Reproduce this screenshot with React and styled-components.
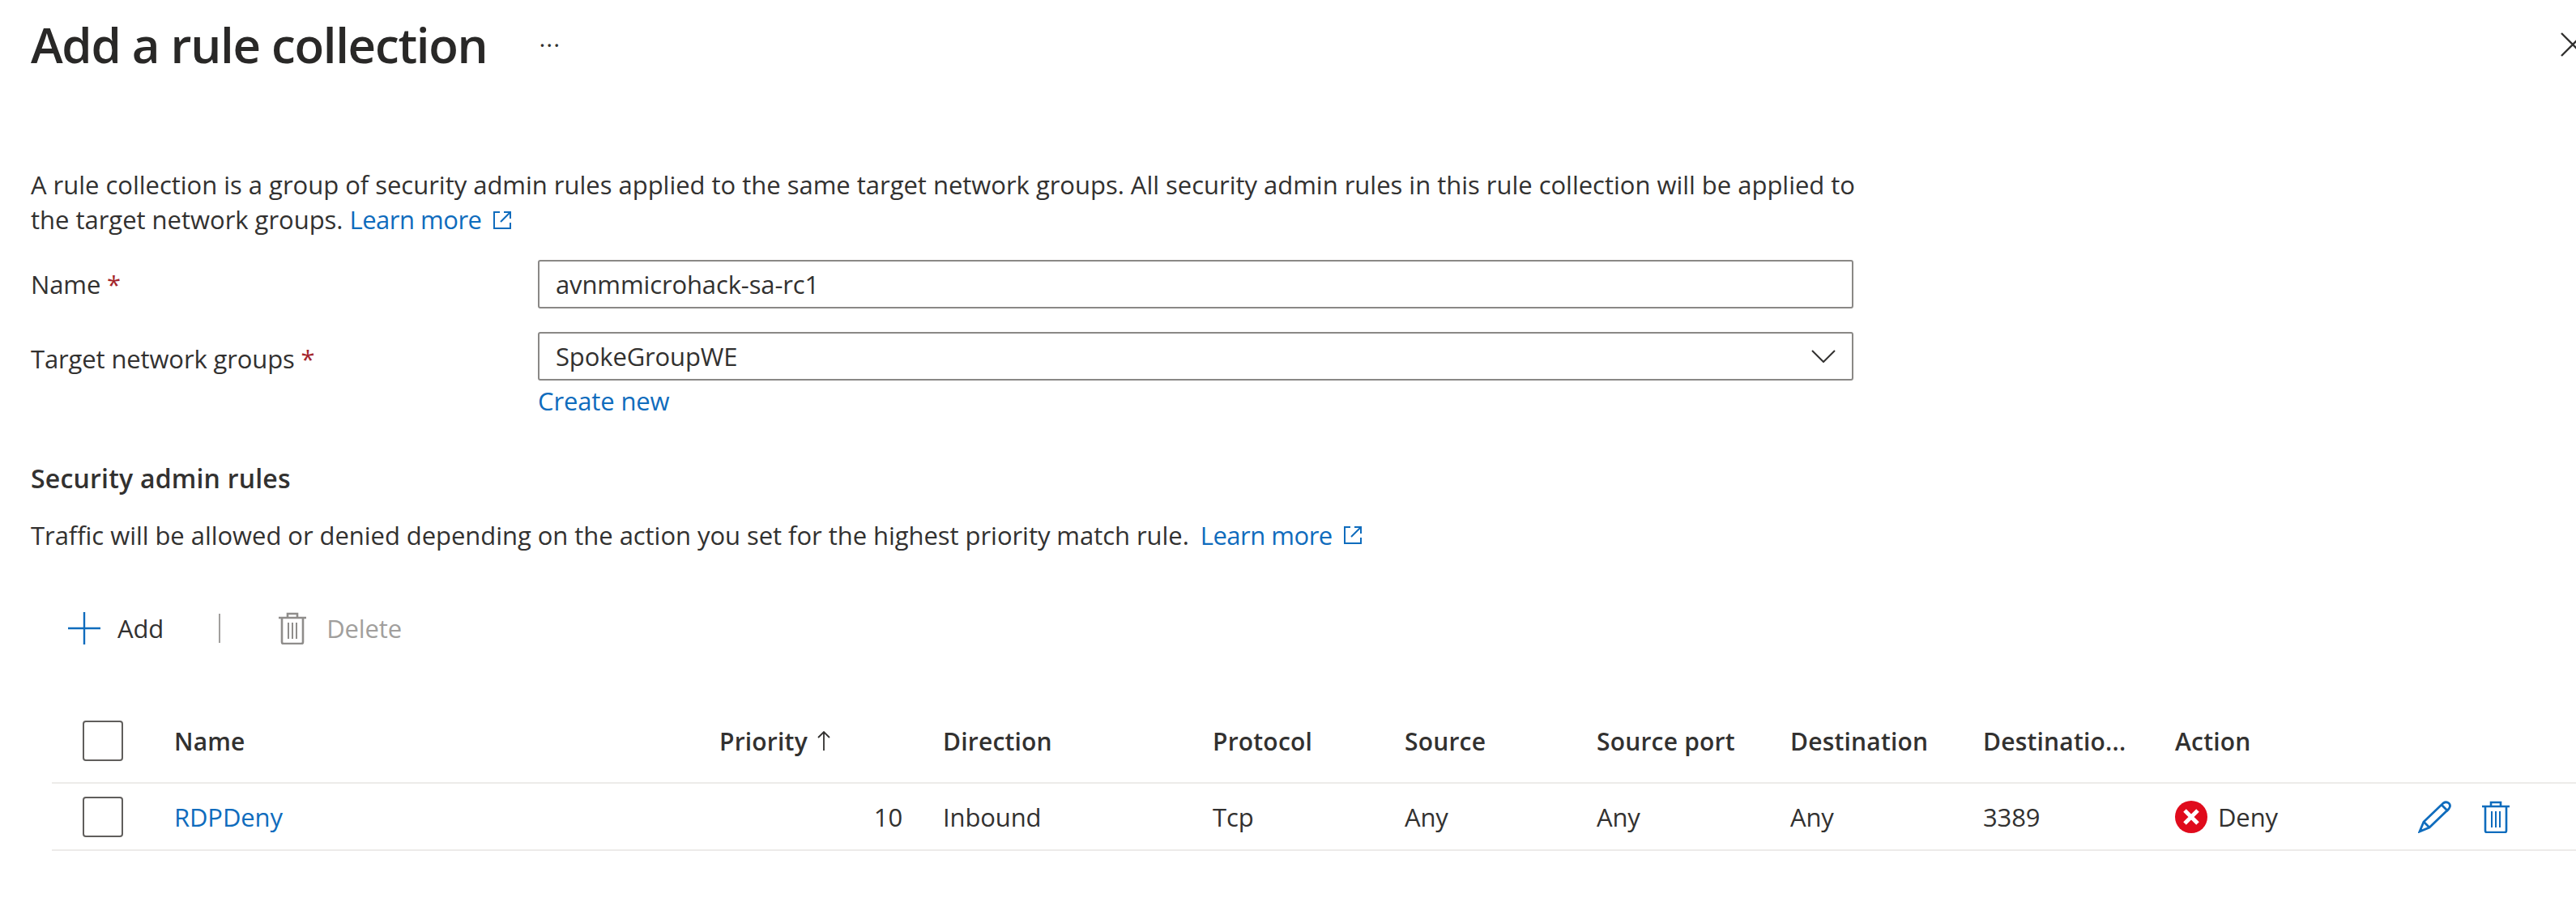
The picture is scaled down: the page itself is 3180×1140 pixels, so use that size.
import styled, { createGlobalStyle } from "styled-components";

const GlobalStyle = createGlobalStyle`
  html, body {
    margin: 0;
    padding: 0;
    background: #ffffff;
  }
  body {
    font-family: "Open Sans", "Noto Sans", sans-serif;
    color: #323130;
  }
`;

const Page = styled.div`
  width: 3180px;
  height: 1140px;
  overflow: hidden;
  box-sizing: border-box;
  padding-left: 38px;
`;

const Header = styled.header`
  display: flex;
  align-items: center;
  height: 110px;
`;

const Title = styled.h1`
  margin: 0;
  font-size: 60px;
  font-weight: 600;
  letter-spacing: -1.3px;
  color: #292827;
`;

const MoreButton = styled.span`
  margin-left: 64px;
  font-size: 30px;
  line-height: 30px;
  letter-spacing: 1px;
`;

const CloseButton = styled.span`
  display: flex;
  margin-left: auto;
  margin-right: -11px;
`;

const Description = styled.p`
  margin: 97px 0 0;
  width: 2270px;
  font-size: 31px;
  line-height: 43px;
  letter-spacing: -0.02px;
`;

const Link = styled.a`
  color: #0f6cbd;
  text-decoration: none;
`;

const LearnMore = styled(Link)`
  display: inline-flex;
  align-items: center;
  gap: 13px;
  letter-spacing: -0.5px;
`;

const FormRow = styled.div`
  display: grid;
  grid-template-columns: 626px 1624px;
  align-items: center;
  margin-top: ${({ $top }) => $top}px;
`;

const FieldLabel = styled.label`
  font-size: 31px;
  letter-spacing: -0.13px;
  margin-top: ${({ $drop }) => $drop || 0}px;
`;

const Required = styled.span`
  color: #a4262c;
`;

const Field = styled.div`
  height: 60px;
  box-sizing: border-box;
  display: flex;
  align-items: center;
  justify-content: space-between;
  padding: 0 20px;
  border: 2px solid #8a8886;
  border-radius: 3px;
  font-size: 31px;
  letter-spacing: -0.13px;
`;

const CreateLink = styled(Link)`
  grid-column: 2;
  font-size: 31px;
  letter-spacing: -0.13px;
  margin-top: 4px;
`;

const SectionTitle = styled.h2`
  margin: 54px 0 0;
  font-size: 32px;
  line-height: 42px;
  font-weight: 600;
  letter-spacing: 0.2px;
`;

const SectionText = styled.p`
  margin: 28px 0 0;
  font-size: 31px;
  line-height: 42px;
  letter-spacing: -0.05px;
  display: flex;
  align-items: center;
  gap: 14px;
`;

const Toolbar = styled.div`
  display: flex;
  align-items: center;
  height: 44px;
  margin: 72px 0 0 46px;
  font-size: 31px;
  letter-spacing: -0.13px;
`;

const ToolButton = styled.span`
  display: flex;
  align-items: center;
  gap: ${({ $gap }) => $gap}px;
  color: ${({ $disabled }) => ($disabled ? "#a19f9d" : "#323130")};
`;

const ToolSeparator = styled.span`
  width: 2px;
  height: 36px;
  margin: 0 72px 0 68px;
  background: #a19f9d;
`;

const Table = styled.div`
  margin: 66px 0 0 26px;
`;

const columns = "151px 673px 276px 333px 237px 237px 239px 238px 237px 300px 1fr";

const HeaderRow = styled.div`
  display: grid;
  grid-template-columns: ${columns};
  align-items: center;
  height: 104px;
  box-sizing: border-box;
  border-bottom: 2px solid #edebe9;
  font-size: 30px;
  font-weight: 600;
  letter-spacing: 0.2px;
`;

const DataRow = styled.div`
  display: grid;
  grid-template-columns: ${columns};
  align-items: center;
  height: 83px;
  box-sizing: border-box;
  border-bottom: 2px solid #edebe9;
  font-size: 31px;
  letter-spacing: -0.13px;
`;

const Checkbox = styled.span`
  display: block;
  width: 50px;
  height: 50px;
  margin-left: 38px;
  box-sizing: border-box;
  border: 2px solid #605e5c;
  border-radius: 4px;
`;

const HeaderCell = styled.span`
  display: flex;
  align-items: center;
  gap: 12px;
`;

const NumberCell = styled.span`
  text-align: right;
  padding-right: 50px;
`;

const ActionCell = styled.span`
  display: flex;
  align-items: center;
  gap: 13px;
`;

const RowActions = styled.span`
  display: flex;
  align-items: center;
  gap: 37px;
`;

const BLUE = "#0f6cbd";

function ExternalIcon() {
  return (
    <svg width="24" height="24" viewBox="0 0 24 24" fill="none" stroke={BLUE} strokeWidth="2">
      <path d="M9 2H2v20h20v-7" />
      <path d="M14 2h8v8M22 2 10 14" />
    </svg>
  );
}

function TrashIcon({ color }) {
  return (
    <svg width="34" height="40" viewBox="0 0 34 40" fill="none" stroke={color} strokeWidth="2.6">
      <path d="M0 7h34M11 7V2h12v5" />
      <path d="M4 7v30q0 2 2 2h22q2 0 2-2V7" />
      <path d="M12 13v20M17 13v20M22 13v20" strokeWidth="2" />
    </svg>
  );
}

function PencilIcon() {
  return (
    <svg width="42" height="40" viewBox="0 0 42 40" fill="none" stroke={BLUE} strokeWidth="2.8">
      <path d="M2 38 7 26 31 3q4-2.500 7 0 3 3 0 7L14 33Z" />
      <path d="M7 26l7 7M29 5l8 8" />
    </svg>
  );
}

function DenyIcon() {
  return (
    <svg width="40" height="40" viewBox="0 0 40 40">
      <circle cx="20" cy="20" r="20" fill="#e00b1c" />
      <path d="M12 12 28 28M28 12 12 28" stroke="#fff" strokeWidth="5" />
    </svg>
  );
}

const tableHead = ["Direction", "Protocol", "Source", "Source port", "Destination", "Destinatio...", "Action"];
const rowValues = ["Inbound", "Tcp", "Any", "Any", "Any", "3389"];

export default function App() {
  return (
    <Page>
      <GlobalStyle />
      <Header>
        <Title>Add a rule collection</Title>
        <MoreButton>···</MoreButton>
        <CloseButton>
          <svg width="30" height="30" viewBox="0 0 30 30" stroke="#323130" strokeWidth="2.4">
            <path d="M1 1 29 29M29 1 1 29" />
          </svg>
        </CloseButton>
      </Header>

      <Description>
        A rule collection is a group of security admin rules applied to the same target network groups. All security admin rules in this rule collection will be applied to the target network groups.{" "}
        <LearnMore>
          Learn more <ExternalIcon />
        </LearnMore>
      </Description>

      <FormRow $top={28}>
        <FieldLabel>
          Name <Required>*</Required>
        </FieldLabel>
        <Field>avnmmicrohack-sa-rc1</Field>
      </FormRow>
      <FormRow $top={29}>
        <FieldLabel $drop={5}>
          Target network groups <Required>*</Required>
        </FieldLabel>
        <Field>
          SpokeGroupWE
          <svg width="30" height="16" viewBox="0 0 30 16" fill="none" stroke="#323130" strokeWidth="2">
            <path d="M1 1 15 15 29 1" />
          </svg>
        </Field>
        <CreateLink>Create new</CreateLink>
      </FormRow>

      <SectionTitle>Security admin rules</SectionTitle>
      <SectionText>
        Traffic will be allowed or denied depending on the action you set for the highest priority match rule.
        <LearnMore>
          Learn more <ExternalIcon />
        </LearnMore>
      </SectionText>

      <Toolbar>
        <ToolButton $gap={21}>
          <svg width="40" height="40" viewBox="0 0 40 40" stroke={BLUE} strokeWidth="2.4">
            <path d="M20 0v40M0 20h40" />
          </svg>
          Add
        </ToolButton>
        <ToolSeparator />
        <ToolButton $disabled $gap={25}>
          <TrashIcon color="#8f8d8b" />
          Delete
        </ToolButton>
      </Toolbar>

      <Table>
        <HeaderRow>
          <Checkbox />
          <HeaderCell>Name</HeaderCell>
          <HeaderCell>
            Priority
            <svg width="16" height="24" viewBox="0 0 16 24" fill="none" stroke="#323130" strokeWidth="1.8">
              <path d="M8 24V1M1 8l7-7 7 7" />
            </svg>
          </HeaderCell>
          {tableHead.map((label) => (
            <HeaderCell key={label}>{label}</HeaderCell>
          ))}
        </HeaderRow>
        <DataRow>
          <Checkbox />
          <Link>RDPDeny</Link>
          <NumberCell>10</NumberCell>
          {rowValues.map((value, index) => (
            <span key={index}>{value}</span>
          ))}
          <ActionCell>
            <DenyIcon />
            Deny
          </ActionCell>
          <RowActions>
            <PencilIcon />
            <TrashIcon color={BLUE} />
          </RowActions>
        </DataRow>
      </Table>
    </Page>
  );
}
